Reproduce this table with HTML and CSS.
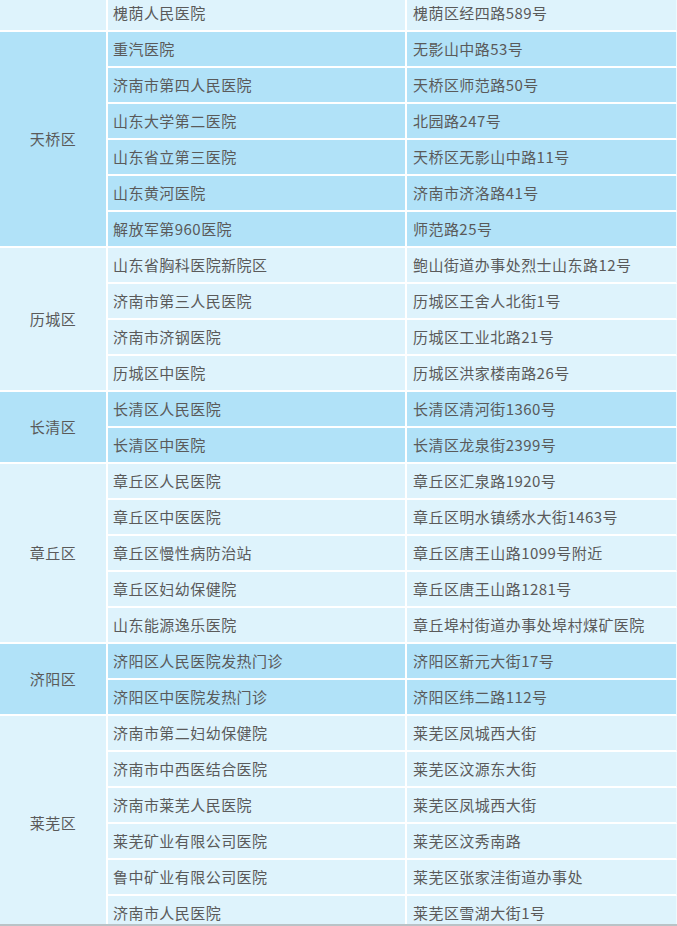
FILE: index.html
```html
<!DOCTYPE html>
<html lang="zh-CN">
<head>
<meta charset="utf-8">
<title>济南市医院</title>
<link rel="stylesheet" href="styles.css">
</head>
<body>
<div class="wrap">
<table class="tbl">
<colgroup><col class="c1"><col class="c2"><col class="c3"></colgroup>
<tbody class="g light">
<tr><td class="dist"></td><td>槐荫人民医院</td><td class="last">槐荫区经四路589号</td></tr>
</tbody>
<tbody class="g dark">
<tr><td class="dist" rowspan="6">天桥区</td><td>重汽医院</td><td class="last">无影山中路53号</td></tr>
<tr><td>济南市第四人民医院</td><td class="last">天桥区师范路50号</td></tr>
<tr><td>山东大学第二医院</td><td class="last">北园路247号</td></tr>
<tr><td>山东省立第三医院</td><td class="last">天桥区无影山中路11号</td></tr>
<tr><td>山东黄河医院</td><td class="last">济南市济洛路41号</td></tr>
<tr><td>解放军第960医院</td><td class="last">师范路25号</td></tr>
</tbody>
<tbody class="g light">
<tr><td class="dist" rowspan="4">历城区</td><td>山东省胸科医院新院区</td><td class="last">鲍山街道办事处烈士山东路12号</td></tr>
<tr><td>济南市第三人民医院</td><td class="last">历城区王舍人北街1号</td></tr>
<tr><td>济南市济钢医院</td><td class="last">历城区工业北路21号</td></tr>
<tr><td>历城区中医院</td><td class="last">历城区洪家楼南路26号</td></tr>
</tbody>
<tbody class="g dark">
<tr><td class="dist" rowspan="2">长清区</td><td>长清区人民医院</td><td class="last">长清区清河街1360号</td></tr>
<tr><td>长清区中医院</td><td class="last">长清区龙泉街2399号</td></tr>
</tbody>
<tbody class="g light">
<tr><td class="dist" rowspan="5">章丘区</td><td>章丘区人民医院</td><td class="last">章丘区汇泉路1920号</td></tr>
<tr><td>章丘区中医医院</td><td class="last">章丘区明水镇绣水大街1463号</td></tr>
<tr><td>章丘区慢性病防治站</td><td class="last">章丘区唐王山路1099号附近</td></tr>
<tr><td>章丘区妇幼保健院</td><td class="last">章丘区唐王山路1281号</td></tr>
<tr><td>山东能源逸乐医院</td><td class="last">章丘埠村街道办事处埠村煤矿医院</td></tr>
</tbody>
<tbody class="g dark">
<tr><td class="dist" rowspan="2">济阳区</td><td>济阳区人民医院发热门诊</td><td class="last">济阳区新元大街17号</td></tr>
<tr><td>济阳区中医院发热门诊</td><td class="last">济阳区纬二路112号</td></tr>
</tbody>
<tbody class="g light">
<tr><td class="dist" rowspan="6">莱芜区</td><td>济南市第二妇幼保健院</td><td class="last">莱芜区凤城西大街</td></tr>
<tr><td>济南市中西医结合医院</td><td class="last">莱芜区汶源东大街</td></tr>
<tr><td>济南市莱芜人民医院</td><td class="last">莱芜区凤城西大街</td></tr>
<tr><td>莱芜矿业有限公司医院</td><td class="last">莱芜区汶秀南路</td></tr>
<tr><td>鲁中矿业有限公司医院</td><td class="last">莱芜区张家洼街道办事处</td></tr>
<tr><td>济南市人民医院</td><td class="last">莱芜区雪湖大街1号</td></tr>
</tbody>
</table>
</div>
</body>
</html>
```

FILE: styles.css
```css
html, body {
  margin: 0;
  padding: 0;
  background: #ffffff;
}
.wrap {
  width: 677px;
  height: 924px;
  overflow: hidden;
  border-bottom: 2px solid #b9c3c7;
}
.tbl {
  width: 677px;
  margin-top: -4px;
  border-collapse: separate;
  border-spacing: 0;
  table-layout: fixed;
  font-family: "Noto Sans CJK SC", "Microsoft YaHei", sans-serif;
  font-size: 15px;
  letter-spacing: 0.45px;
  color: #5a5a5a;
}
.c1 { width: 108px; }
.c2 { width: 299px; }
.c3 { width: 270px; }
.tbl td {
  height: 34px;
  padding: 0 0 0 5px;
  line-height: 34px;
  border-bottom: 2px solid #ffffff;
  border-right: 2px solid #ffffff;
  white-space: nowrap;
  overflow: hidden;
  vertical-align: middle;
}
.tbl td.last {
  padding-left: 6px;
  border-right: 1px solid #eef9fd;
}
.tbl td.dist {
  padding: 0;
  text-align: center;
}
.light td { background: #def3fc; }
.dark td { background: #b1e2f8; }
```
